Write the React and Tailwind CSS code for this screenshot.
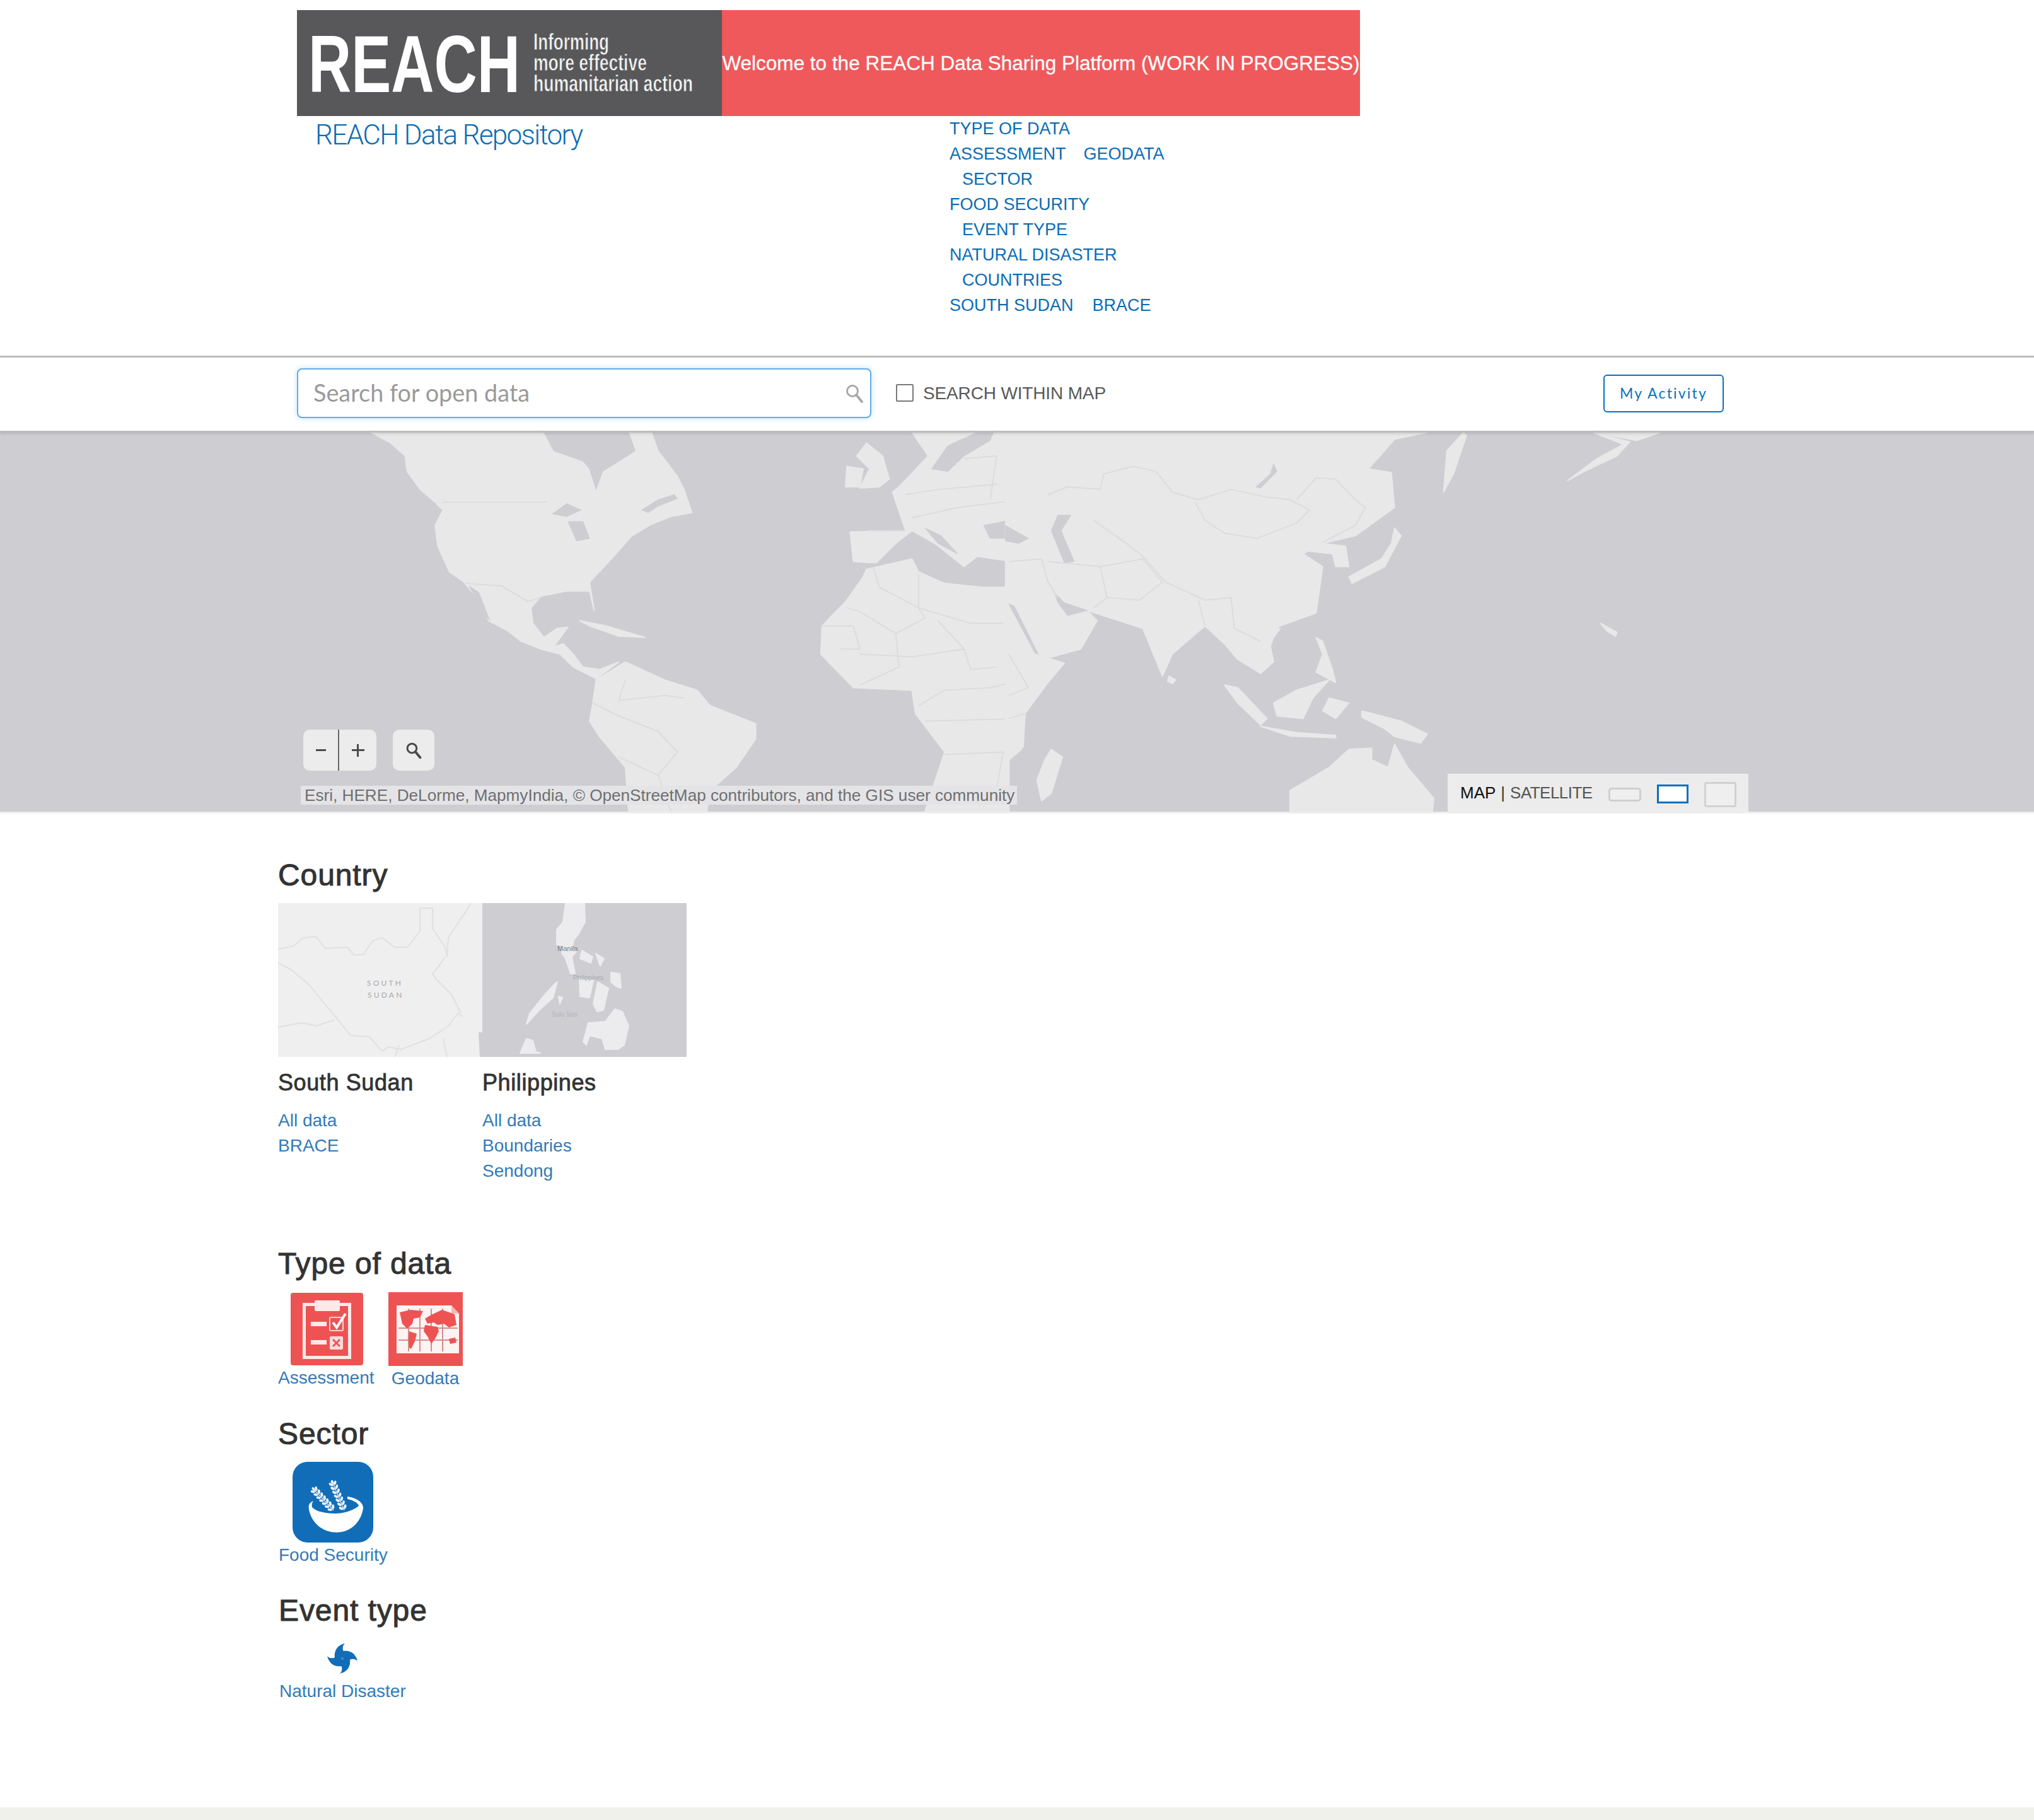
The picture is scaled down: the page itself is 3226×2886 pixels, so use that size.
import React from "react";

const Z2_LAND = [
  "M570 38 L600 80 L622 130 L625 190 L645 260 L668 310 L680 340 L668 400 L672 480 L690 580 L712 620 L745 720 L750 770 L780 810 L800 850 L830 880 L860 900 L880 950 L915 995 L950 930 L920 960 L895 950 L880 900 L865 860 L850 870 L872 795 L855 800 L835 835 L818 780 L815 720 L830 675 L870 655 L905 655 L912 730 L905 620 L935 540 L970 440 L1000 395 L1030 365 L1062 350 L1050 260 L1040 210 L1010 110 L1000 38 Z",
  "M915 1000 L960 930 L1020 1000 L1070 1040 L1090 1100 L1160 1170 L1160 1230 L1130 1340 L1090 1430 L1085 1510 L965 1510 L960 1340 L920 1220 L905 1160 L910 1090 Z",
  "M1330 80 L1355 130 L1365 220 L1350 250 L1320 255 L1335 180 L1315 130 Z",
  "M1300 170 L1325 180 L1320 250 L1298 250 Z",
  "M1400 38 L1425 130 L1380 250 L1370 270 L1390 420 L1305 425 L1310 540 L1345 545 L1375 470 L1400 420 L1435 470 L1480 560 L1500 520 L1568 545 L1568 38 Z",
  "M1330 570 L1400 530 L1410 580 L1450 625 L1510 640 L1568 640 L1568 1270 L1549 1310 L1549 1510 L1420 1510 L1450 1280 L1405 1130 L1400 1040 L1310 1030 L1260 900 L1262 790 L1300 690 L1325 600 Z",
  "M890 770 L930 790 L990 835 L950 830 L905 790 Z",
];
const Z2_WATER = [
  "M835 38 L850 110 L895 150 L905 180 L915 260 L925 190 L975 110 L965 38 Z",
  "M848 355 L870 315 L892 340 L870 365 Z",
  "M872 385 L895 385 L905 450 L885 460 Z",
  "M985 340 L1010 300 L1035 280 L1040 295 L1010 325 L995 350 Z",
  "M1500 38 L1455 90 L1430 180 L1455 190 L1480 130 L1520 70 L1525 38 Z",
  "M1510 400 L1568 370 L1568 450 L1520 450 Z",
  "M720 635 L735 660 L752 770 L738 720 Z",
  "M1420 410 L1445 440 L1470 510 L1440 470 Z",
];
const Z2_BORDER = [
  "M680 310 L840 310",
  "M715 625 L770 635 L810 695 L830 680",
  "M1340 560 L1350 640 L1410 720 L1420 760 L1375 820 L1320 735 L1300 720",
  "M1410 590 L1410 720 L1490 780 L1540 780",
  "M1260 790 L1310 790 L1320 880 L1290 880",
  "M1375 820 L1380 950 L1320 1020",
  "M1440 770 L1480 880 L1490 960 L1530 950",
  "M1320 900 L1400 910 L1480 880",
  "M1568 1000 L1520 1030 L1450 1040 L1410 1100",
  "M1420 1160 L1568 1150",
  "M1450 1290 L1540 1280 L1530 1420",
  "M960 1000 L950 1080 L1020 1060 L1050 1070",
  "M910 1090 L950 1140 L1010 1200 L1040 1280 L1010 1370 L1030 1510",
  "M950 1300 L1010 1370",
  "M1390 280 L1440 260 L1530 240",
  "M1400 370 L1470 330 L1568 300",
  "M1330 420 L1390 420",
  "M1480 140 L1530 130 L1520 300",
];
const Z3_LAND = [
  "M-5 38 L640 38 L590 65 L550 180 L585 195 L590 330 L530 440 L480 470 L450 510 L480 560 L475 650 L470 740 L410 795 L400 870 L405 930 L385 975 L350 920 L330 860 L300 790 L250 900 L235 985 L205 800 L120 730 L135 770 L110 880 L45 925 L0 700 L-5 640 Z",
  "M-5 635 L0 700 L42 900 L85 935 L60 1010 L25 1130 L22 1260 L0 1310 L-5 1510 Z",
  "M480 470 L515 480 L520 560 L500 560 L495 510 L460 500 Z",
  "M590 410 L600 440 L575 560 L525 625 L520 600 L570 530 L585 470 Z",
  "M695 40 L670 110 L665 270 L680 200 L700 50 Z",
  "M895 40 L950 75 L930 130 L880 190 L855 225 L900 140 L940 85 Z",
  "M900 40 L995 40 L960 70 Z",
  "M400 795 L415 800 L405 835 Z",
  "M470 835 L480 850 L495 960 L500 1010 L470 970 L480 900 Z",
  "M330 1020 L350 1030 L395 1150 L385 1175 L350 1090 Z",
  "M385 1180 L440 1205 L500 1215 L500 1225 L430 1218 Z",
  "M405 1090 L440 1040 L490 1000 L465 1070 L450 1150 L410 1140 Z",
  "M490 1070 L520 1090 L500 1150 L480 1120 Z",
  "M540 1120 L600 1160 L640 1210 L630 1245 L590 1220 L575 1190 L540 1145 Z",
  "M430 1510 L430 1430 L490 1340 L520 1270 L555 1265 L555 1310 L580 1340 L590 1250 L610 1340 L650 1460 L648 1510 Z",
  "M65 1270 L82 1300 L65 1440 L50 1470 L43 1390 L55 1310 Z",
  "M245 985 L255 1000 L250 1015 L243 1005 Z",
  "M905 780 L930 815 L928 830 L915 810 Z",
];
const Z3_WATER = [
  "M75 360 L95 360 L80 420 L100 540 L85 545 L65 420 Z",
  "M-5 400 L30 450 L15 470 L-5 460 Z",
  "M405 160 L410 190 L385 255 L378 250 L400 200 Z",
  "M70 660 L85 700 L120 730 L90 750 L75 700 Z",
  "M0 705 L8 712 L45 900 L40 895 Z",
];
const Z3_BORDER = [
  "M60 280 L90 250 L140 260 L145 200 L190 170 L225 190 L250 270 L290 300 L340 260 L395 290 L430 300 L460 340 L440 390 L380 450 L330 430 L300 380 L285 310",
  "M440 300 L470 215 L500 220 L530 300 L545 330 L530 400 L480 465",
  "M130 380 L180 470 L205 520 L240 620 L300 690 L340 680",
  "M0 540 L50 530 L60 620 L75 680",
  "M60 540 L140 560 L205 530",
  "M140 560 L150 680",
  "M205 530 L235 620 L200 690 L150 680 L130 720",
  "M340 680 L345 800 L385 850",
  "M290 690 L300 790",
  "M0 900 L30 1030 L0 1060",
  "M0 1150 L25 1130",
];

function WorldMap() {
  const land = "#e8e8e9";
  const water = "#cdcdd2";
  const Group = ({ t, l, w, b }) => (
    <g transform={t}>
      {l.map((d, i) => <path key={i} d={d} fill={land} stroke={land} strokeWidth="2" strokeLinejoin="round" vectorEffect="non-scaling-stroke" />)}
      {w.map((d, i) => <path key={i} d={d} fill={water} stroke={water} strokeWidth="1" strokeLinejoin="round" vectorEffect="non-scaling-stroke" />)}
      {b.map((d, i) => <path key={i} d={d} fill="none" stroke="#dcdcde" strokeWidth="2" strokeLinejoin="round" vectorEffect="non-scaling-stroke" />)}
    </g>
  );
  return (
    <svg viewBox="0 686 3226 601" className="block w-full h-full" preserveAspectRatio="none">
      <rect x="0" y="686" width="3226" height="601" fill={water} />
      <Group t="translate(0 670) scale(1.0332 0.40816)" l={Z2_LAND} w={Z2_WATER} b={Z2_BORDER} />
      <Group t="translate(1600 670) scale(1.037 0.40816)" l={Z3_LAND} w={Z3_WATER} b={Z3_BORDER} />
    </svg>
  );
}

function SudanThumb() {
  const s = "#e0e0e2";
  return (
    <svg viewBox="0 0 324 244" className="block w-[324px] h-[244px]">
      <rect width="324" height="244" fill="#efefef" />
      <g fill="none" stroke={s} strokeWidth="2" strokeLinejoin="round">
        <path d="M0 73 L25 68 L40 55 L60 53 L75 72 L110 70 L120 82 L135 82 L150 60 L165 55 L185 70 L205 70 L225 45 L225 8 L245 8 L245 40 L265 70 L268 85 L270 55 L300 10 L306 0" />
        <path d="M0 95 L20 105 L50 130 L70 155 L95 185 L115 210 L145 212 L165 235 L175 228 L195 232 L240 215 L270 195 L285 175 L293 180" />
        <path d="M265 85 L255 100 L245 112 L250 120 L275 145 L290 175" />
        <path d="M0 197 L25 192 L40 190 L60 195 L90 185" />
        <path d="M185 244 L192 225" />
        <path d="M268 244 L262 215" />
      </g>
      <path d="M318 205 L324 205 L324 244 L320 244 Z" fill="#cdcdd2" />
      <text x="141" y="131" fontSize="12" letterSpacing="3.2" fill="#a8a8a8" fontFamily="Lato, sans-serif">SOUTH</text>
      <text x="142" y="150" fontSize="12" letterSpacing="3.2" fill="#a8a8a8" fontFamily="Lato, sans-serif">SUDAN</text>
    </svg>
  );
}

function PhilippinesThumb() {
  const l = "#ececee";
  const islands = [
    "M132 0 L162 0 L163 30 L152 50 L145 58 L143 70 L118 66 L118 42 L128 30 Z",
    "M128 66 L150 76 L142 85 L147 112 L140 112 L132 88 L126 80 Z",
    "M158 75 L175 85 L172 95 L155 88 Z",
    "M180 80 L193 88 L187 100 Z",
    "M204 110 L218 112 L220 135 L212 132 L204 125 Z",
    "M154 120 L176 122 L170 150 L155 148 Z",
    "M183 125 L200 135 L192 170 L182 172 L176 160 Z",
    "M119 125 L112 150 L90 170 L70 192 L75 175 L95 150 L113 130 Z",
    "M168 190 L195 188 L210 168 L222 172 L232 195 L225 225 L215 232 L195 232 L190 215 L170 210 L165 225 L160 220 Z",
    "M60 238 L70 215 L80 218 L85 236 L92 238 L60 238 Z",
    "M121 148 L127 150 L123 160 Z",
  ];
  return (
    <svg viewBox="0 0 324 244" className="block w-[324px] h-[244px]">
      <rect width="324" height="244" fill="#cdcdd2" />
      {islands.map((d, i) => <path key={i} d={d} fill={l} stroke={l} strokeWidth="2" strokeLinejoin="round" />)}
      <text x="119" y="76" fontSize="11" fill="#7a7a7e" fontFamily="Liberation Sans, sans-serif">Manila</text>
      <text x="144" y="122" fontSize="10" fill="#a9a9ad" fontFamily="Liberation Sans, sans-serif">Philippines</text>
      <text x="110" y="180" fontSize="10" fill="#b6b6ba" fontFamily="Liberation Sans, sans-serif">Sulu Sea</text>
    </svg>
  );
}

function AssessmentIcon() {
  return (
    <svg viewBox="0 0 115 115" className="block w-[115px] h-[115px]">
      <rect width="115" height="115" rx="4" fill="#ee5353" />
      <rect x="21.5" y="18.5" width="72" height="84" fill="none" stroke="#fde9e9" strokeWidth="5" />
      <rect x="38" y="12" width="40" height="17" rx="2" fill="#fde9e9" />
      <rect x="32" y="46" width="25" height="7" fill="#fde9e9" />
      <rect x="32" y="75" width="25" height="7" fill="#fde9e9" />
      <rect x="62" y="39" width="21" height="21" rx="2" fill="none" stroke="#fad4d4" strokeWidth="2" />
      <path d="M67 47 L73 55 L87 33" fill="none" stroke="#fff" strokeWidth="4" />
      <rect x="62" y="69" width="21" height="21" rx="2" fill="#fbdcdc" />
      <path d="M67 74 L78 85 M78 74 L67 85" stroke="#ee5353" strokeWidth="3" />
    </svg>
  );
}

function GeodataIcon() {
  return (
    <svg viewBox="0 0 118 117" className="block w-[118px] h-[117px]">
      <rect width="118" height="117" fill="#ee5353" />
      <path d="M13 21 L100 21 L112 34 L112 97 L13 97 Z" fill="#fdf3f3" />
      <path d="M100 21 L100 34 L112 34 Z" fill="#f7b5b5" />
      <g stroke="#c96a6a" strokeWidth="2" opacity="0.75">
        <path d="M16 76 L110 76 M16 57 L110 57 M32 26 L32 94 M50 26 L50 94 M68 26 L68 94 M86 26 L86 94" />
      </g>
      <g fill="#ee5353">
        <path d="M18 32 L35 28 L55 30 L50 40 L40 42 L38 50 L30 58 L22 50 Z" />
        <path d="M33 62 L45 66 L42 78 L36 90 L33 88 L32 74 Z" />
        <path d="M58 42 L68 36 L85 28 L105 35 L108 52 L96 56 L88 50 L78 52 L72 48 L62 50 Z" />
        <path d="M58 52 L78 55 L80 62 L74 74 L68 82 L62 70 L56 62 Z" />
        <path d="M96 74 L106 72 L108 80 L98 82 Z" />
      </g>
    </svg>
  );
}

function Stalk({ x1, y1, x2, y2 }) {
  const pts = [0.06, 0.2, 0.34, 0.48, 0.62, 0.76, 0.9];
  const ang = (Math.atan2(y2 - y1, x2 - x1) * 180) / Math.PI + 90;
  return (
    <g fill="#eef4fa">
      <path d={`M${x1} ${y1} L${x2} ${y2}`} stroke="#dcebf6" strokeWidth="1.5" />
      {pts.map((t) => {
        const x = x1 + (x2 - x1) * t;
        const y = y1 + (y2 - y1) * t;
        return (
          <g key={t} transform={`translate(${x} ${y}) rotate(${ang})`}>
            <ellipse cx="-3.5" cy="-2" rx="2" ry="3.6" transform="rotate(-35 -3.5 -2)" />
            <ellipse cx="3.5" cy="-2" rx="2" ry="3.6" transform="rotate(35 3.5 -2)" />
          </g>
        );
      })}
      <ellipse cx={x2} cy={y2} rx="2" ry="3" transform={`rotate(${ang} ${x2} ${y2})`} />
    </g>
  );
}

function BowlIcon() {
  return (
    <svg viewBox="0 0 128 128" className="block w-[128px] h-[128px]">
      <rect width="128" height="128" rx="24" fill="#116db8" />
      <path d="M33 62 C24 66 25 72 27 80 C33 100 50 112 70 112 C90 112 108 98 112 74 C113 64 100 57 87 55 L87 59 C96 61 104 65 105 70 C95 78 80 82 68 82 C50 82 36 78 31 72 C30 68 31 65 33 62 Z" fill="#fff" />
      <Stalk x1={82} y1={77} x2={63} y2={32} />
      <Stalk x1={65} y1={77} x2={33} y2={43} />
    </svg>
  );
}

function StormIcon() {
  const arm = "M29 0 C17 3 10 12 13 26 L27 14 C25 9 25 4 29 0 Z";
  return (
    <svg viewBox="0 0 50 50" className="block w-[50px] h-[48px]">
      <g fill="#116db8">
        <circle cx="25" cy="25" r="13" />
        {[0, 90, 180, 270].map((r) => <path key={r} d={arm} transform={`rotate(${r} 25 25)`} />)}
      </g>
      <circle cx="25" cy="25" r="2" fill="#4c93cd" />
    </svg>
  );
}

function GlassIcon({ cls, color, w }) {
  return (
    <svg viewBox="0 0 30 32" className={cls}>
      <circle cx="12" cy="12" r="8.5" fill="none" stroke={color} strokeWidth={w} />
      <path d="M18 18 L27 29" stroke={color} strokeWidth={w + 1} strokeLinecap="round" />
    </svg>
  );
}

const Heading = ({ children, className }) => (
  <h2 className={`h-[60px] leading-[60px] text-[48px] tracking-[0.9px] text-[#333333] [-webkit-text-stroke:1px_#333333] ${className}`}>{children}</h2>
);
const Sub = ({ children }) => (
  <h3 className="h-[40px] leading-[40px] text-[36px] tracking-[0.6px] text-[#333333] [-webkit-text-stroke:0.8px_#333333]">{children}</h3>
);
const L = ({ children, className = "" }) => (
  <a className={`block h-[40px] leading-[40px] text-[28px] text-[#337ab7] whitespace-nowrap ${className}`}>{children}</a>
);
const N = ({ children, className = "" }) => (
  <a className={`text-[#0b6cb5] ${className}`}>{children}</a>
);

export default function App() {
  return (
    <div className="w-[3226px] h-[2886px] bg-white flex flex-col overflow-hidden [font-family:'Liberation_Sans',sans-serif]">
      <header className="h-[564px] pt-[16px] pl-[471px] shrink-0">
        <div className="flex w-[1686px] h-[168px]">
          <div className="w-[674px] shrink-0 h-full bg-[#58585a]">
            <svg viewBox="0 0 674 168" className="block w-full h-full">
              <text x="18" y="130" fontSize="128" fontWeight="700" fill="#fff" textLength="336" lengthAdjust="spacingAndGlyphs" fontFamily="Liberation Sans, sans-serif">REACH</text>
              <g fill="#f4f4f4" fontFamily="Liberation Sans, sans-serif" fontSize="36" fontWeight="700" stroke="#58585a" strokeWidth="0.8">
                <text x="375" y="63" textLength="120" lengthAdjust="spacingAndGlyphs">Informing</text>
                <text x="375" y="96" textLength="180" lengthAdjust="spacingAndGlyphs">more effective</text>
                <text x="375" y="129" textLength="253" lengthAdjust="spacingAndGlyphs">humanitarian action</text>
              </g>
            </svg>
          </div>
          <div className="flex-1 bg-[#ef595b] flex items-center justify-center pt-px text-white text-[31.5px] [-webkit-text-stroke:0.3px_#ffffff] whitespace-nowrap">
            Welcome to the REACH Data Sharing Platform (WORK IN PROGRESS)
          </div>
        </div>
        <div className="flex">
          <div className="w-[1035px] pl-[29px] text-[44px] tracking-[-1.65px] leading-[60px] text-[#0b6cb5] [font-family:Roboto,sans-serif] font-light">
            REACH Data Repository
          </div>
          <nav className="text-[27px] leading-[40px] whitespace-nowrap">
            <div><N>TYPE OF DATA</N></div>
            <div className="flex gap-[28px]"><N>ASSESSMENT</N><N>GEODATA</N></div>
            <div className="pl-[20px]"><N>SECTOR</N></div>
            <div><N>FOOD SECURITY</N></div>
            <div className="pl-[20px]"><N>EVENT TYPE</N></div>
            <div><N>NATURAL DISASTER</N></div>
            <div className="pl-[20px]"><N>COUNTRIES</N></div>
            <div className="flex gap-[30px]"><N>SOUTH SUDAN</N><N>BRACE</N></div>
          </nav>
        </div>
      </header>

      <div className="relative z-10 h-[122px] shrink-0 bg-white flex items-center pl-[471px] pr-[492px] pb-[3px] border-t-[3px] border-b-[3px] border-[#bdbdbd] shadow-[0_2px_4px_rgba(0,0,0,0.12)]">
        <div className="w-[911px] h-[79px] flex items-center justify-between pl-[24px] pr-[10px] bg-white border-2 border-[#63ace8] rounded-[8px] shadow-[0_0_8px_rgba(99,172,232,0.4)]">
          <span className="text-[37.8px] text-[#9a9a9a] [font-family:Lato,sans-serif]">Search for open data</span>
          <GlassIcon cls="w-[30px] h-[32px]" color="#a9a9a9" w={3} />
        </div>
        <div className="ml-[39px] mb-[2px] w-[28px] h-[28px] border-2 border-[#7a7a7a] rounded-[2px]" />
        <span className="ml-[15px] text-[28px] tracking-[-0.15px] text-[#58585a]">SEARCH WITHIN MAP</span>
        <button className="ml-auto w-[191px] h-[60px] border-2 border-[#0a70bd] rounded-[6px] text-[#0a70bd] text-[23px] tracking-[2.2px] [font-family:Lato,sans-serif]">
          My Activity
        </button>
      </div>

      <section className="relative h-[601px] shrink-0">
        <WorldMap />
        <div className="absolute left-[481px] top-[471px] flex h-[65px] w-[116px] rounded-[10px] bg-[#ececec] text-[#4a4a4a] text-[36px]">
          <div className="w-[57px] flex items-center justify-center border-r-2 border-[#666666]">
            <span className="block w-[16px] h-[3px] bg-[#4a4a4a]" />
          </div>
          <div className="flex-1 flex items-center justify-center relative">
            <span className="block w-[20px] h-[3px] bg-[#4a4a4a]" />
            <span className="absolute w-[3px] h-[20px] bg-[#4a4a4a]" />
          </div>
        </div>
        <div className="absolute left-[623px] top-[471px] flex h-[65px] w-[66px] items-center justify-center rounded-[10px] bg-[#ececec]">
          <GlassIcon cls="w-[26px] h-[28px]" color="#4a4a4a" w={3.5} />
        </div>
        <div className="absolute left-[477px] top-[560px] h-[30px] w-[1136px] pl-[6px] leading-[30px] text-[26.15px] bg-[#e4e4e7] text-[#6f6f6f] whitespace-nowrap">
          Esri, HERE, DeLorme, MapmyIndia, © OpenStreetMap contributors, and the GIS user community
        </div>
        <div className="absolute left-[2296px] top-[541px] h-[60px] w-[477px] bg-[#ececec] flex items-start pl-[20px] pt-[13px]">
          <span className="text-[26px] leading-[34px] text-[#111111]">MAP</span>
          <span className="mx-[8px] text-[26px] leading-[34px] text-[#333333]">|</span>
          <span className="text-[26px] tracking-[-0.55px] leading-[34px] text-[#555555]">SATELLITE</span>
          <span className="ml-[25px] mt-[9px] block w-[52px] h-[22px] bg-[#efefef] border-[3px] border-[#cfcfcf] rounded-[5px]" />
          <span className="ml-[25px] mt-[4px] block w-[50px] h-[30px] bg-white border-[3px] border-[#0a70bd]" />
          <span className="ml-[25px] mt-0 block w-[51px] h-[40px] bg-[#efefef] border-[3px] border-[#d2d2d2] rounded-[3px]" />
        </div>
      </section>
      <div className="h-[3px] shrink-0 bg-[#eeeeee]" />

      <main className="flex-1 pl-[441px] flex flex-col">
        <Heading className="mt-[68px]">Country</Heading>
        <div className="mt-[14px] grid grid-cols-[324px_324px]">
          <div>
            <SudanThumb />
            <div className="mt-[21px]"><Sub>South Sudan</Sub></div>
            <div className="mt-[20px]"><L>All data</L><L>BRACE</L></div>
          </div>
          <div>
            <PhilippinesThumb />
            <div className="mt-[21px]"><Sub>Philippines</Sub></div>
            <div className="mt-[20px]"><L>All data</L><L>Boundaries</L><L>Sendong</L></div>
          </div>
        </div>

        <Heading className="mt-[97px]">Type of data</Heading>
        <div className="mt-[15px] flex gap-[22px]">
          <div className="flex flex-col items-center">
            <div className="pt-px pl-[2px]"><AssessmentIcon /></div>
            <L>Assessment</L>
          </div>
          <div className="flex flex-col items-center">
            <GeodataIcon />
            <L>Geodata</L>
          </div>
        </div>

        <Heading className="mt-[38px]">Sector</Heading>
        <div className="mt-[14px] pl-px flex">
          <div className="flex flex-col items-center">
            <BowlIcon />
            <L>Food Security</L>
          </div>
        </div>

        <Heading className="mt-[38px] pl-px">Event type</Heading>
        <div className="mt-[22px] pl-[2px] flex">
          <div className="flex flex-col items-center">
            <StormIcon />
            <L className="mt-[8px]">Natural Disaster</L>
          </div>
        </div>
      </main>
      <footer className="h-[20px] shrink-0 bg-[#f1f1ec]" />
    </div>
  );
}
